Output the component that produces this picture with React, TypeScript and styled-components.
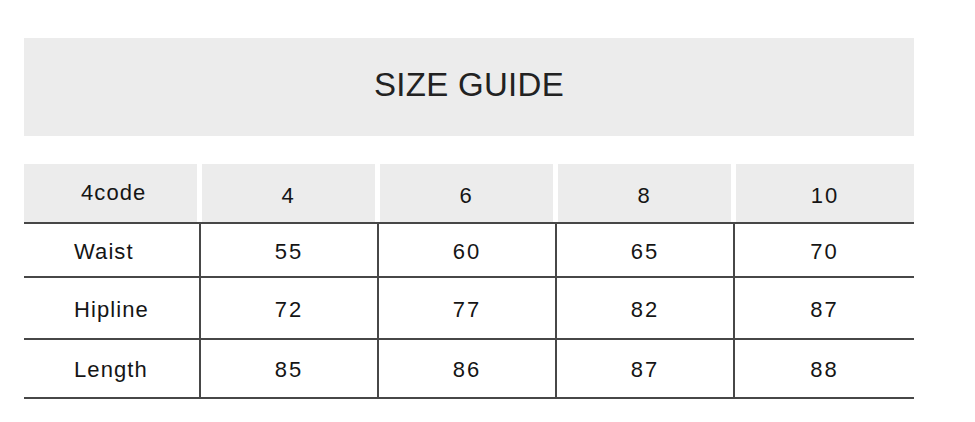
import styled, { createGlobalStyle } from "styled-components";

// size chart data
const sizes = ["4", "6", "8", "10"];
const rows = [
  { label: "Waist", values: ["55", "60", "65", "70"], height: 52 },
  { label: "Hipline", values: ["72", "77", "82", "87"], height: 60 },
  { label: "Length", values: ["85", "86", "87", "88"], height: 57 },
];

const GlobalStyle = createGlobalStyle`
  body {
    margin: 0;
    background: #fff;
    font-family: "Liberation Sans", Arial, sans-serif;
    color: #151515;
  }
`;

export default function App() {
  return (
    <>
      <GlobalStyle />
      <Page>
        <Banner>
          <Title>SIZE GUIDE</Title>
        </Banner>
        <Table>
          <HeadRow>
            <HeadCell>4code</HeadCell>
            {sizes.map((s) => (
              <HeadCell key={s} $num>
                {s}
              </HeadCell>
            ))}
          </HeadRow>
          {rows.map((r, i) => (
            <BodyRow key={r.label} $h={r.height} $last={i === rows.length - 1}>
              <Cell>{r.label}</Cell>
              {r.values.map((v, j) => (
                <Cell key={j} $num>
                  {v}
                </Cell>
              ))}
            </BodyRow>
          ))}
        </Table>
      </Page>
    </>
  );
}

const Page = styled.div`
  width: 890px;
  padding: 38px 0 0 24px;
`;

const Banner = styled.div`
  height: 98px;
  background: #ececec;
  display: flex;
  align-items: center;
  justify-content: center;
`;

const Title = styled.h1`
  margin: 0 0 4px 0;
  font-size: 33px;
  font-weight: normal;
  letter-spacing: 0.3px;
  color: #222;
`;

const Table = styled.div`
  margin-top: 28px;
  display: flex;
  flex-direction: column;
`;

const HeadRow = styled.div`
  display: grid;
  grid-template-columns: 173px 173px 173px 173px 1fr;
  column-gap: 5px;
  height: 58px;
`;

const HeadCell = styled.div<{ $num?: boolean }>`
  background: #ececec;
  display: flex;
  align-items: center;
  justify-content: ${(p) => (p.$num ? "center" : "flex-start")};
  font-size: 22px;
  letter-spacing: ${(p) => (p.$num ? "2px" : "1.1px")};
  padding-top: ${(p) => (p.$num ? "5px" : "0")};
  padding-left: ${(p) => (p.$num ? "0" : "57px")};
`;

const BodyRow = styled.div<{ $h: number; $last?: boolean }>`
  display: grid;
  grid-template-columns: 175px 176px 176px 176px 1fr;
  column-gap: 2px;
  background: #474747;
  border-top: 2px solid #474747;
  border-bottom: ${(p) => (p.$last ? "2px solid #474747" : "none")};
  height: ${(p) => p.$h}px;
`;

const Cell = styled.div<{ $num?: boolean }>`
  background: #fff;
  display: flex;
  align-items: center;
  justify-content: ${(p) => (p.$num ? "center" : "flex-start")};
  font-size: 22px;
  letter-spacing: ${(p) => (p.$num ? "2px" : "1.1px")};
  padding-top: 3px;
  padding-left: ${(p) => (p.$num ? "0" : "50px")};
`;
